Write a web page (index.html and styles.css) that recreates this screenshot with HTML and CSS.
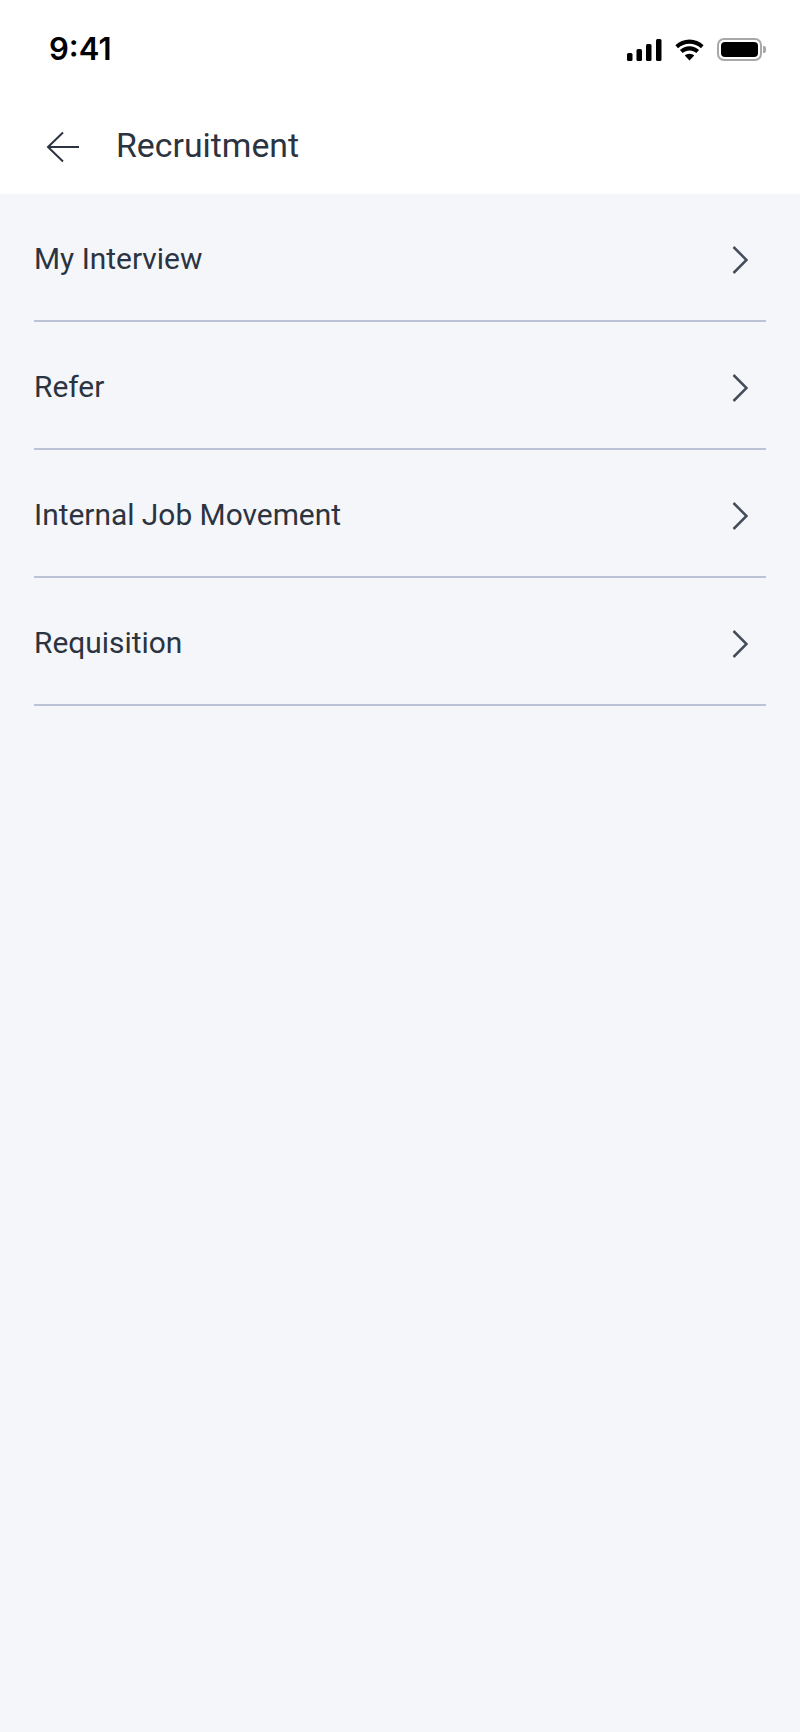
FILE: index.html
```html
<!DOCTYPE html>
<html lang="en">
<head>
<meta charset="utf-8">
<title>Recruitment</title>
<link rel="stylesheet" href="styles.css">
</head>
<body>
<div class="top">
  <div class="status">
    <span class="time">9:41</span>
    <div class="status-icons">
      <svg class="signal" width="35" height="22" viewBox="0 0 35 22"><rect x="0" y="14" width="5.500" height="8" rx="1.500"/><rect x="9.500" y="10" width="5.500" height="12" rx="1.500"/><rect x="19" y="5" width="5.500" height="17" rx="1.500"/><rect x="29" y="0" width="5.500" height="22" rx="1.500"/></svg>
      <svg class="wifi" width="31" height="22" viewBox="0 0 31 22"><path d="M15.500 4.800c4.400 0 8.400 1.700 11.400 4.500l2.700-3C25.800 2.700 20.900.5 15.500.5S5.200 2.700 1.400 6.300l2.700 3c3-2.800 7-4.500 11.400-4.500z"/><path d="M15.500 11.400c2.600 0 5 1 6.800 2.600l2.800-3c-2.600-2.300-6-3.800-9.600-3.800s-7 1.500-9.600 3.800l2.800 3c1.800-1.600 4.200-2.600 6.800-2.600z"/><path d="M15.500 21.500l4.700-5c-1.200-1.100-2.900-1.800-4.700-1.800s-3.500.7-4.700 1.800z"/></svg>
      <div class="battery"><div class="battery-fill"></div></div>
    </div>
  </div>
  <header class="bar">
    <svg class="back" width="34" height="32" viewBox="0 0 34 32"><path d="M33 16H2M17 1.500 2 16l15 14.500"/></svg>
    <h1 class="title">Recruitment</h1>
  </header>
</div>
<main class="list">
  <a class="row"><span class="label">My Interview</span><svg class="chev" width="16" height="28" viewBox="0 0 16 28"><path d="M1.500 1 14.500 14 1.500 27"/></svg></a>
  <a class="row"><span class="label">Refer</span><svg class="chev" width="16" height="28" viewBox="0 0 16 28"><path d="M1.500 1 14.500 14 1.500 27"/></svg></a>
  <a class="row"><span class="label">Internal Job Movement</span><svg class="chev" width="16" height="28" viewBox="0 0 16 28"><path d="M1.500 1 14.500 14 1.500 27"/></svg></a>
  <a class="row"><span class="label">Requisition</span><svg class="chev" width="16" height="28" viewBox="0 0 16 28"><path d="M1.500 1 14.500 14 1.500 27"/></svg></a>
</main>
</body>
</html>
```
FILE: styles.css
```css
* { box-sizing: border-box; }
html, body { margin: 0; height: 100%; }
body {
  background: #f4f6fa;
  font-family: Roboto, "Liberation Sans", sans-serif;
  color: #2b3440;
  min-height: 1732px;
}
.top { background: #fff; height: 194px; }
.status {
  height: 100px;
  padding: 0 38px 0 49px;
  display: flex;
  justify-content: space-between;
  align-items: flex-start;
}
.time {
  margin-top: 30px;
  font-family: Inter, sans-serif;
  font-weight: 600;
  font-size: 31px;
  line-height: 38px;
  color: #000;
}
.status-icons { display: flex; align-items: center; gap: 12px; margin-top: 38px; }
.signal, .wifi { fill: #000; display: block; }
.battery {
  position: relative;
  width: 45px;
  height: 23px;
  border: 2px solid #a8a8a8;
  border-radius: 7px;
  padding: 2px;
}
.battery::after {
  content: "";
  position: absolute;
  right: -6px;
  top: 6px;
  width: 3px;
  height: 7px;
  background: #a8a8a8;
  border-radius: 0 2px 2px 0;
}
.battery-fill { width: 100%; height: 100%; background: #000; border-radius: 4px; }
.bar { height: 94px; padding-left: 46px; display: flex; align-items: flex-start; }
.back {
  margin-top: 31px;
  fill: none;
  stroke: #2b3440;
  stroke-width: 2;
  display: block;
}
.title {
  margin: 26px 0 0 36px;
  font-weight: 400;
  font-size: 33.800px;
  line-height: 40px;
}
.list { padding: 0 34px; }
.row {
  display: flex;
  justify-content: space-between;
  height: 128px;
  border-bottom: 2px solid #bcc3d6;
  padding-right: 18px;
}
.label { font-size: 29.900px; line-height: 38px; margin-top: 46px; }
.chev {
  margin-top: 52px;
  fill: none;
  stroke: #454d5c;
  stroke-width: 2.500;
  display: block;
}
```
